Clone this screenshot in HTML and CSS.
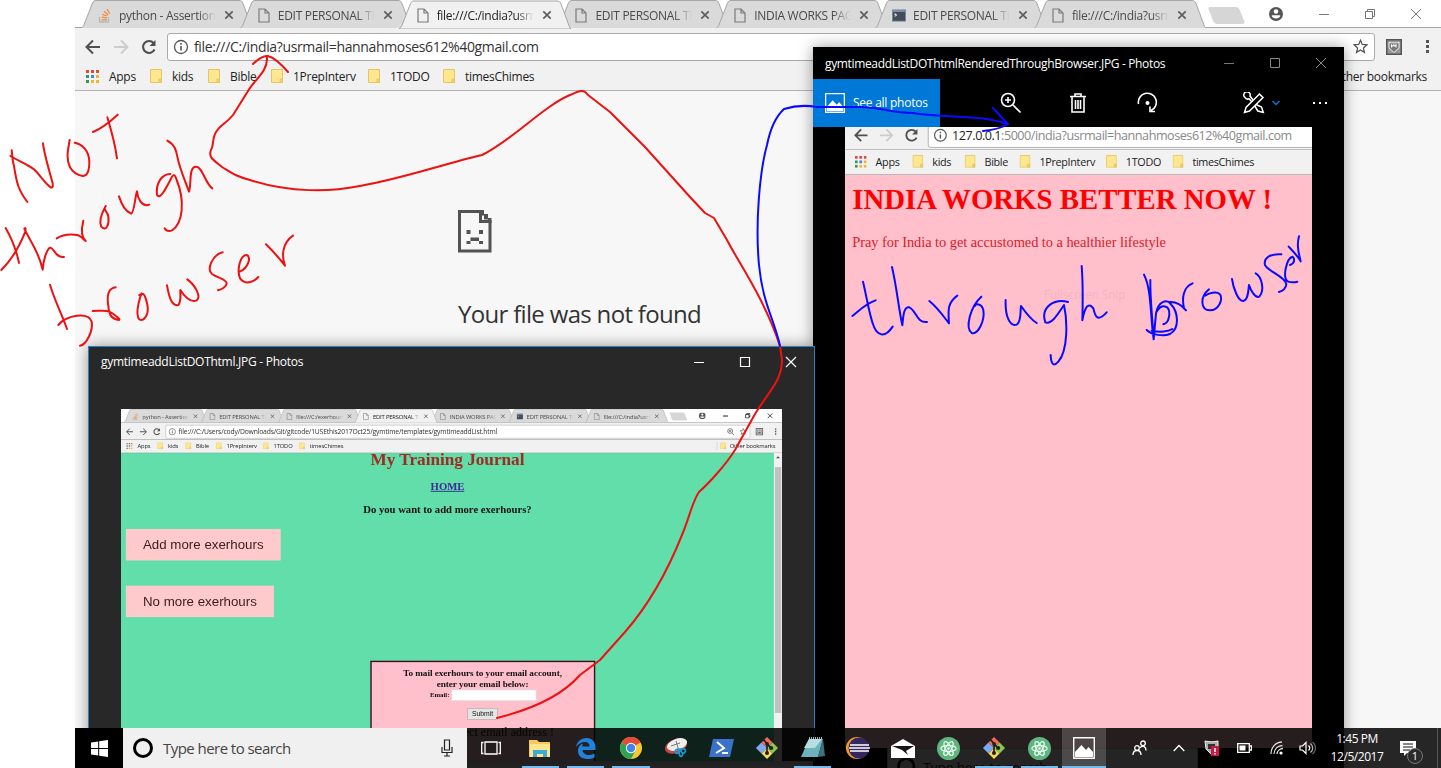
FILE: index.html
```
<!DOCTYPE html>
<html lang="en">
<head>
<meta charset="utf-8">
<title>Desktop</title>
<link rel="stylesheet" href="styles.css">
</head>
<body>
<svg class="defs" width="0" height="0">
  <symbol id="page" viewBox="0 0 12 15"><path d="M1 1h6l4 4v9H1zM7 1v4h4" fill="none" stroke="#7b7b7b" stroke-width="1.2"/></symbol>
  <symbol id="x" viewBox="0 0 10 10"><path d="M1.3 1.3l7.4 7.4M8.700 1.3L1.3 8.700" stroke="#5f5f5f" stroke-width="1.7"/></symbol>
  <symbol id="stack" viewBox="0 0 14 15"><path d="M1.500 9v5h9V9" fill="none" stroke="#b9b9b9" stroke-width="1.300"/><path d="M3.500 11.800h5.500M3.600 9.200l5.400.7M4.300 6.300l5.100 1.700M6 3.300l4.200 3.500M9 1l2.700 4.500" stroke="#f08a3c" stroke-width="1.300"/></symbol>
  <symbol id="term" viewBox="0 0 16 14"><path fill="#7c8ea5" d="M0 0h16v14H0z"/><path fill="#444c58" d="M1 3h14v10H1z"/><path d="M3 5l2 1.500L3 8" stroke="#fff" stroke-width="1.200" fill="none"/></symbol>
  <symbol id="tabshape" viewBox="0 0 172 28"><path d="M0 28.500L2.500 26 11.500 3C12.500 1 13.500 .5 15 .5h143c2 0 3 .7 4 3l8.500 23 1.500 2z" stroke="#a6a6a6"/></symbol>
  <symbol id="back" viewBox="0 0 16 16"><path d="M15 8H2M8 1.500L1.500 8 8 14.500" fill="none" stroke="currentColor" stroke-width="2"/></symbol>
  <symbol id="reload" viewBox="0 0 16 16"><path d="M13.500 10.500A6 6 0 1 1 12.600 4" fill="none" stroke="#505050" stroke-width="2.100"/><path d="M14.500 1v6h-6z" fill="#505050"/></symbol>
  <symbol id="info" viewBox="0 0 16 16"><circle cx="8" cy="8" r="6.500" fill="none" stroke="#555" stroke-width="1.300"/><path d="M8 7v4.500M8 4v1.700" stroke="#555" stroke-width="1.600"/></symbol>
  <symbol id="folder" viewBox="0 0 12 14"><path d="M.5 .5h11v13H.5z" fill="#ffe78f" stroke="#e6c662"/><path d="M9 13.500V10h2.500v3.500z" fill="#f3ce66" stroke="#e6c662"/></symbol>
  <symbol id="apps" viewBox="0 0 13 13"><path fill="#de4b3f" d="M0 0h3v3H0zM5 0h3v3H5zM10 0h3v3h-3z"/><path fill="#2c9a5b" d="M0 5h3v3H0z"/><path fill="#4387d6" d="M5 5h3v3H5z"/><path fill="#efb62b" d="M10 5h3v3h-3z"/><path fill="#2c9a5b" d="M0 10h3v3H0z"/><path fill="#efb62b" d="M5 10h3v3H5zM10 10h3v3h-3z"/></symbol>
  <symbol id="user" viewBox="0 0 14 14"><circle cx="7" cy="7" r="7" fill="#555"/><circle cx="7" cy="4.500" r="2.300" fill="#fff"/><path d="M2.800 8.300h8.400v1.200C9.500 12 4.500 12 2.800 9.500z" fill="#fff"/></symbol>
  <symbol id="star" viewBox="0 0 15 15"><path d="M7.500 1.300l1.800 4.200 4.500.4-3.400 3 1 4.400-3.900-2.300-3.900 2.300 1-4.400-3.400-3 4.500-.4z" fill="none" stroke="#555" stroke-width="1.300"/></symbol>
  <symbol id="badge" viewBox="0 0 16 16"><path fill="#555" d="M0 0h16v16H0z"/><path d="M1.500 1.500h13v13h-13z" fill="#999"/><path d="M3 3.500c3 .5 7 .5 10 0v5.300L8 13.500 3 8.800z" fill="#777" stroke="#eee"/><path d="M5.500 8.500v-3l1.300 2 1-2 1 2 1.300-2v3" stroke="#fff" fill="none"/></symbol>
  <symbol id="git" viewBox="0 0 26 26"><path d="M13 1l6 6-6 6-6-6z" fill="#f16a5d"/><path d="M7 7l6 6-6 6-6-6z" fill="#7ea9ee"/><path d="M19 7l6 6-6 6-6-6z" fill="#8cc552"/><path d="M13 13l6 6-6 6-6-6z" fill="#f8d85c"/><path d="M9 4l4 4v11M13 8l4 5" fill="none" stroke="#20201c" stroke-width="1.800"/><circle cx="13" cy="8.500" r="2" fill="#20201c"/><circle cx="17.500" cy="13" r="2.200" fill="#20201c"/><circle cx="13" cy="18.500" r="2.200" fill="#20201c"/></symbol>
  <symbol id="atom" viewBox="0 0 24 24"><circle cx="12" cy="12" r="12" fill="#5fb57d"/><g fill="none" stroke="#e8fff0" stroke-width="1.200"><ellipse cx="12" cy="12" rx="8" ry="3"/><ellipse cx="12" cy="12" rx="8" ry="3" transform="rotate(60 12 12)"/><ellipse cx="12" cy="12" rx="8" ry="3" transform="rotate(120 12 12)"/></g><circle cx="12" cy="12" r="1.300" fill="#fff"/></symbol>
  <symbol id="photo" viewBox="0 0 22 22"><path d="M.7 .7h20.600v20.600H.7z" fill="none" stroke="#fff" stroke-width="1.400"/><path d="M2 20v-5l6.500-7 4.500 5 2.500-3 4.500 5v5z" fill="#fff"/></symbol>
</svg>

<main class="desktop">
  <section class="browser main-browser">
    <div class="tabs">
      <div class="tab"><svg class="shape"><use href="#tabshape"/></svg><svg class="fav"><use href="#stack"/></svg><span>python - Assertion</span><svg class="close"><use href="#x"/></svg></div>
      <div class="tab"><svg class="shape"><use href="#tabshape"/></svg><svg class="fav"><use href="#page"/></svg><span>EDIT PERSONAL TR</span><svg class="close"><use href="#x"/></svg></div>
      <div class="tab active"><svg class="shape"><use href="#tabshape"/></svg><svg class="fav"><use href="#page"/></svg><span>file:///C:/india?usrm</span><svg class="close"><use href="#x"/></svg></div>
      <div class="tab"><svg class="shape"><use href="#tabshape"/></svg><svg class="fav"><use href="#page"/></svg><span>EDIT PERSONAL TR</span><svg class="close"><use href="#x"/></svg></div>
      <div class="tab"><svg class="shape"><use href="#tabshape"/></svg><svg class="fav"><use href="#page"/></svg><span>INDIA WORKS PAG</span><svg class="close"><use href="#x"/></svg></div>
      <div class="tab"><svg class="shape"><use href="#tabshape"/></svg><svg class="fav"><use href="#term"/></svg><span>EDIT PERSONAL TR</span><svg class="close"><use href="#x"/></svg></div>
      <div class="tab"><svg class="shape"><use href="#tabshape"/></svg><svg class="fav"><use href="#page"/></svg><span>file:///C:/india?usrm</span><svg class="close"><use href="#x"/></svg></div>
      <i class="newtab"></i>
      <div class="caption"><svg width="14" height="14"><use href="#user"/></svg><svg width="12" height="12"><path d="M1 6.500h10" stroke="#777"/></svg><svg width="12" height="12"><path d="M1.500 3.500h7v7h-7zM3.500 3.500v-2h7v7h-2" fill="none" stroke="#777"/></svg><svg width="12" height="12"><path d="M1 1l10 10M11 1L1 11" stroke="#777"/></svg></div>
    </div>
    <div class="toolbar">
      <svg class="nav"><use href="#back"/></svg><svg class="nav fwd off"><use href="#back"/></svg><svg class="nav"><use href="#reload"/></svg>
      <div class="omnibox"><svg width="16" height="16"><use href="#info"/></svg><span class="url">file:///C:/india?usrmail=hannahmoses612%40gmail.com</span><svg class="end" width="15" height="15"><use href="#star"/></svg></div>
      <svg width="16" height="16"><use href="#badge"/></svg><svg class="menu" width="4" height="14"><path d="M0 0h3v3H0zM0 5h3v3H0zM0 10h3v3H0z" fill="#555"/></svg>
    </div>
    <div class="bookmarks">
      <div class="bm a"><svg width="13" height="13"><use href="#apps"/></svg><span>Apps</span></div>
      <div class="bm b"><svg width="12" height="14"><use href="#folder"/></svg><span>kids</span></div>
      <div class="bm c"><svg width="12" height="14"><use href="#folder"/></svg><span>Bible</span></div>
      <div class="bm d"><svg width="12" height="14"><use href="#folder"/></svg><span>1PrepInterv</span></div>
      <div class="bm e"><svg width="12" height="14"><use href="#folder"/></svg><span>1TODO</span></div>
      <div class="bm f"><svg width="12" height="14"><use href="#folder"/></svg><span>timesChimes</span></div>
      <div class="bm other"><svg width="12" height="14"><use href="#folder"/></svg><span>Other bookmarks</span></div>
    </div>
    <div class="error-page">
      <svg width="34" height="43"><path d="M22 1.500H1.500v39.500H32V12" fill="none" stroke="#535353" stroke-width="3"/><path d="M22.500 0v11.500H33.500" fill="none" stroke="#535353" stroke-width="3"/><path d="M22 0h4v4h4v4h3.500v5H30V9.500h-4v-4h-4z" fill="#535353"/><path d="M8.500 20h4v4h-4zM21 20h4v4h-4zM8.500 34v-3h4v-3.500H21V31h4v3h-4v-3h-8.500v3z" fill="#535353"/></svg>
      <h2>Your file was not found</h2>
    </div>
  </section>

  <section class="photos right-win">
    <div class="titlebar"><span>gymtimeaddListDOThtmlRenderedThroughBrowser.JPG - Photos</span>
      <div class="ctl"><svg><path d="M1 6.500h10" stroke="#777"/></svg><svg><path d="M1.500 1.500h9v9h-9z" fill="none" stroke="#888"/></svg><svg><path d="M1 1l10 10M11 1L1 11" stroke="#888"/></svg></div></div>
    <div class="commands">
      <div class="seeall"><svg width="20" height="20"><use href="#photo"/></svg><span>See all photos</span></div>
      <svg class="c1" width="22" height="22"><g fill="none" stroke="#fff" stroke-width="1.600"><circle cx="8" cy="8" r="6.500"/><path d="M13 13l7.500 7.500M5 8h6M8 5v6"/></g></svg>
      <svg class="c2" width="18" height="22"><path d="M1 4.500h16M6 4V2h6v2M3 5v15h12V5M6.500 8v9M9 8v9M11.500 8v9" fill="none" stroke="#fff" stroke-width="1.600"/></svg>
      <svg class="c3" width="22" height="22"><path d="M1.500 12A9 9 0 1 1 14 18.500M13 14.500v5h5" fill="none" stroke="#fff" stroke-width="1.600"/><circle cx="10.500" cy="11" r="2" fill="#fff"/></svg>
      <svg class="c4" width="22" height="22"><g fill="none" stroke="#fff" stroke-width="1.500"><path d="M1.500 20.500l1.500-5L16.500 2 20 5.500 6.500 19z"/><path d="M2 5.500a3.200 3.200 0 1 1 5-1.500l3 4M2 5.500c1.200 1.500 3 1.800 4 1.200l3 3.300M13 12.500l5.500 2.500 1.800 5.500-5.500-1.500-3-5"/></g></svg>
      <svg class="c5" width="8" height="6"><path d="M.5 1l3.500 3.500L7.500 1" fill="none" stroke="#0078d7" stroke-width="1.500"/></svg>
      <svg class="c6" width="16" height="4"><path d="M1 1h2v2H1zM7 1h2v2H7zM13 1h2v2h-2z" fill="#fff"/></svg>
    </div>
    <div class="picture">
      <div class="browser shot">
        <div class="tabs"></div>
        <div class="toolbar">
          <svg class="nav"><use href="#back"/></svg><svg class="nav fwd off"><use href="#back"/></svg><svg class="nav"><use href="#reload"/></svg>
          <div class="omnibox"><svg width="16" height="16"><use href="#info"/></svg><span class="url local"><b>127.0.0.1</b>:5000/india?usrmail=hannahmoses612%40gmail.com</span></div>
        </div>
        <div class="bookmarks">
          <div class="bm a"><svg width="13" height="13"><use href="#apps"/></svg><span>Apps</span></div>
          <div class="bm b"><svg width="12" height="14"><use href="#folder"/></svg><span>kids</span></div>
          <div class="bm c"><svg width="12" height="14"><use href="#folder"/></svg><span>Bible</span></div>
          <div class="bm d"><svg width="12" height="14"><use href="#folder"/></svg><span>1PrepInterv</span></div>
          <div class="bm e"><svg width="12" height="14"><use href="#folder"/></svg><span>1TODO</span></div>
          <div class="bm f"><svg width="12" height="14"><use href="#folder"/></svg><span>timesChimes</span></div>
        </div>
        <div class="pink-page">
          <h1>INDIA WORKS BETTER NOW !</h1>
          <p>Pray for India to get accustomed to a healthier lifestyle</p>
          <p class="ghost">Fullscreen Snip</p>
        </div>
        <div class="inner-task"><div class="inner-search"><i></i>Type here to search</div></div>
      </div>
    </div>
  </section>

  <section class="photos left-win">
    <div class="titlebar"><span>gymtimeaddListDOThtml.JPG - Photos</span>
      <div class="ctl"><svg><path d="M1 6.500h10" stroke="#fff"/></svg><svg><path d="M1.500 1.500h9v9h-9z" fill="none" stroke="#fff" stroke-width="1.200"/></svg><svg><path d="M1 1l10 10M11 1L1 11" stroke="#fff" stroke-width="1.200"/></svg></div></div>
    <div class="picture">
      <div class="browser shot">
        <div class="tabs">
          <div class="tab"><svg class="shape"><use href="#tabshape"/></svg><svg class="fav"><use href="#stack"/></svg><span>python - Assertion</span><svg class="close"><use href="#x"/></svg></div>
          <div class="tab"><svg class="shape"><use href="#tabshape"/></svg><svg class="fav"><use href="#page"/></svg><span>EDIT PERSONAL TR</span><svg class="close"><use href="#x"/></svg></div>
          <div class="tab"><svg class="shape"><use href="#tabshape"/></svg><svg class="fav"><use href="#page"/></svg><span>file:///C:/exerhours</span><svg class="close"><use href="#x"/></svg></div>
          <div class="tab active"><svg class="shape"><use href="#tabshape"/></svg><svg class="fav"><use href="#page"/></svg><span>EDIT PERSONAL TR</span><svg class="close"><use href="#x"/></svg></div>
          <div class="tab"><svg class="shape"><use href="#tabshape"/></svg><svg class="fav"><use href="#page"/></svg><span>INDIA WORKS PAG</span><svg class="close"><use href="#x"/></svg></div>
          <div class="tab"><svg class="shape"><use href="#tabshape"/></svg><svg class="fav"><use href="#term"/></svg><span>EDIT PERSONAL TR</span><svg class="close"><use href="#x"/></svg></div>
          <div class="tab"><svg class="shape"><use href="#tabshape"/></svg><svg class="fav"><use href="#page"/></svg><span>file:///C:/india?usrm</span><svg class="close"><use href="#x"/></svg></div>
          <i class="newtab"></i>
          <div class="caption dark"><svg width="14" height="14"><use href="#user"/></svg><svg width="12" height="12"><path d="M1 6.500h10" stroke="#111" stroke-width="2"/></svg><svg width="12" height="12"><path d="M1.500 3.500h7v7h-7zM3.500 3.500v-2h7v7h-2" fill="none" stroke="#111" stroke-width="1.500"/></svg><svg width="12" height="12"><path d="M1 1l10 10M11 1L1 11" stroke="#111" stroke-width="1.500"/></svg></div>
        </div>
        <div class="toolbar">
          <svg class="nav"><use href="#back"/></svg><svg class="nav fwd"><use href="#back"/></svg><svg class="nav"><use href="#reload"/></svg>
          <div class="omnibox"><svg width="16" height="16"><use href="#info"/></svg><span class="url long">file:///C:/Users/cody/Downloads/Git/gitcode/1USEthis2017Oct25/gymtime/templates/gymtimeaddList.html</span><svg class="end" width="16" height="16"><path d="M10 10l5 5M4 6.500h5M6.500 4v5" stroke="#555" stroke-width="1.500"/><circle cx="6.500" cy="6.500" r="5" fill="none" stroke="#555" stroke-width="1.500"/></svg><svg class="after" width="15" height="15"><use href="#star"/></svg></div>
          <svg width="16" height="16"><use href="#badge"/></svg><svg class="menu" width="4" height="14"><path d="M0 0h3v3H0zM0 5h3v3H0zM0 10h3v3H0z" fill="#555"/></svg>
        </div>
        <div class="bookmarks">
          <div class="bm a"><svg width="13" height="13"><use href="#apps"/></svg><span>Apps</span></div>
          <div class="bm b"><svg width="12" height="14"><use href="#folder"/></svg><span>kids</span></div>
          <div class="bm c"><svg width="12" height="14"><use href="#folder"/></svg><span>Bible</span></div>
          <div class="bm d"><svg width="12" height="14"><use href="#folder"/></svg><span>1PrepInterv</span></div>
          <div class="bm e"><svg width="12" height="14"><use href="#folder"/></svg><span>1TODO</span></div>
          <div class="bm f"><svg width="12" height="14"><use href="#folder"/></svg><span>timesChimes</span></div>
          <div class="bm other"><svg width="12" height="14"><use href="#folder"/></svg><span>Other bookmarks</span></div>
        </div>
        <div class="journal">
          <div class="content">
            <h1>My Training Journal</h1>
            <a>HOME</a>
            <h3>Do you want to add more exerhours?</h3>
            <div class="big add">Add more exerhours</div>
            <div class="big no">No more exerhours</div>
            <div class="mailbox">
              <h4>To mail exerhours to your email account,<br>enter your email below:</h4>
              <div class="field"><b>Email:</b><i></i></div>
              <div class="submit">Submit</div>
              <div class="warn">Enter correct email address !</div>
            </div>
          </div>
          <div class="scroll"><svg width="17" height="17"><path d="M4.500 10.500l4-4 4 4z" fill="#444"/></svg><i></i></div>
        </div>
      </div>
    </div>
  </section>

  <footer class="taskbar">
    <div class="start"><svg width="17" height="17"><path d="M0 2.500l7.200-1V8H0zM8.200 1.300L17 0v8H8.200zM0 9h7.200v6.500L0 14.500zM8.200 9H17v8l-8.800-1.300z" fill="#fff"/></svg></div>
    <div class="search"><i></i><span>Type here to search</span><svg width="12" height="18"><path d="M3.500 1h5v10h-5zM1 8v5.500h10V8M6 13.500V17M3 17h6" fill="none" stroke="#222" stroke-width="1.200"/></svg></div>
    <div class="apps">
      <div class="view"><svg width="20" height="16"><path d="M4 2h12v12H4zM2.500 2.500H.7v11h1.800M17.500 2.500h1.800v11h-1.800" fill="none" stroke="#fff" stroke-width="1.300"/></svg></div>
      <div class="run"><svg width="22" height="19"><path d="M0 1h8l2 2h11v15H0z" fill="#f5c95a"/><path d="M1 5h20v13H1z" fill="#fde58d"/><path d="M4 18v-7h14v7h-4v-3H8v3z" fill="#3cabd6"/></svg></div>
      <div class="run"><svg width="21" height="21"><path d="M1 9C2 3 7 0 11.500 0 17 0 20.500 4 20.500 9v3H7.500c.3 3.500 3 5 6.500 5 2 0 4-.6 5.500-1.500v4C17.500 20.700 15 21 12.500 21 6 21 2.500 17 3 12c.3-3 2-5.500 5-6.500C7.500 6.500 7.300 7.500 7.300 8.500H14.500C14.500 5.500 13 4 10 4 6 4 3 6 1 9z" fill="#1d83dc"/></svg></div>
      <div class="run"><svg width="22" height="22"><circle cx="11" cy="11" r="11" fill="#f6c933"/><path d="M11 11L1.500 5.500A11 11 0 0 1 20.500 5.500z" fill="#e24a3b"/><path d="M1.500 5.500A11 11 0 0 0 11 22l4.500-8.500L11 11z" fill="#2fa352"/><circle cx="11" cy="11" r="5.200" fill="#fff"/><circle cx="11" cy="11" r="4.200" fill="#4285e8"/></svg></div>
      <div><svg width="25" height="22"><ellipse cx="12" cy="9" rx="11.500" ry="7" transform="rotate(-20 12 9)" fill="#c84642"/><ellipse cx="13" cy="7.500" rx="10.500" ry="5.700" transform="rotate(-20 13 7.500)" fill="#eee"/><path d="M7 9l9-3M12 4l3 10" stroke="#777"/><path d="M15 12c-6 0-4 6-1 4zM16 12c1 3 3 6 5 3s-2-4-5-3zM16 13c-2 3 0 8 2 6s0-4-2-6z" fill="none" stroke="#2596cf" stroke-width="1.700"/></svg></div>
      <div><svg width="25" height="20"><path d="M4 1h21l-4 18H0z" fill="#3b72c9"/><path d="M8 4l7 6-8 5M13 15h6" stroke="#fff" stroke-width="2" fill="none"/></svg></div>
      <div><svg width="24" height="24"><use href="#git"/></svg></div>
      <div class="run"><svg width="24" height="22"><path d="M8 2h14l-5 18H0z" fill="#6fb1bd"/><path d="M8 2h13l-7 9H3z" fill="#b7dee2"/><path d="M8 1h14" stroke="#eee" stroke-width="1.500" stroke-dasharray="1 1"/><path d="M17 20l5-18 2 17z" fill="#3c737c"/></svg></div>
      <div><svg width="24" height="22"><circle cx="11" cy="11" r="11" fill="#f79a2c"/><circle cx="13" cy="11" r="10.500" fill="#34265f"/><path d="M4 8h19M3 11h21M4 14h19" stroke="#fff" stroke-width="1.700"/></svg></div>
      <div><svg width="24" height="19"><path d="M0 7l12-7 12 7v12H0z" fill="#fff"/><path d="M1 7h22l-8 5 2 4-6-5z" fill="#171416"/></svg></div>
      <div><svg width="23" height="23"><use href="#atom"/></svg></div>
      <div class="run"><svg width="24" height="24"><use href="#git"/></svg></div>
      <div class="run"><svg width="23" height="23"><use href="#atom"/></svg></div>
      <div class="run current"><svg width="22" height="22"><use href="#photo"/></svg></div>
    </div>
    <div class="tray">
      <svg class="people" width="15" height="16"><g fill="none" stroke="#fff" stroke-width="1.300"><circle cx="5" cy="8" r="2.300"/><path d="M1 15c0-6 8-6 8 0"/><circle cx="11" cy="3.300" r="2.300"/><path d="M8 8c2-3 6-2 6 2.500"/></g></svg>
      <svg class="up" width="12" height="8"><path d="M.7 7L6 1.500 11.300 7" fill="none" stroke="#fff" stroke-width="1.300"/></svg>
      <svg class="shield" width="15" height="16"><path d="M1 1c4 1 9 1 13 0v8l-7 5-5-5z" fill="#aaa" stroke="#eee"/><path d="M4 4h7v5H4z" fill="#333"/><path d="M7 6h8v10H7z" fill="#cb1745"/><path d="M11 8v4M11 13v1.500" stroke="#fff" stroke-width="1.500"/></svg>
      <svg class="battery" width="15" height="10"><path d="M.7 .7h11.600v8.600H.7zM13 3h1.500v4H13" fill="none" stroke="#fff" stroke-width="1.300"/><path d="M2.500 2.500h6v5h-6z" fill="#fff"/></svg>
      <svg class="wifi" width="14" height="14"><g fill="none" stroke="#ddd" stroke-width="1.300"><path d="M1 13C1 6 6 1 12 1M4 13c0-5 4-8.500 8.500-8.500M7 13c0-3 3-5.500 6-5.500"/></g><circle cx="11" cy="12" r="1.600" fill="#fff"/></svg>
      <svg class="sound" width="17" height="14"><g fill="none" stroke="#fff" stroke-width="1.200"><path d="M1 5h2.500L7 1.500v11L3.500 9H1z"/><path d="M9.500 4.500c1.500 1.500 1.500 3.500 0 5"/><path d="M11.500 2.500c3 2.500 3 6.500 0 9" stroke="#bbb"/><path d="M13.500 1c4 3.500 4 8.500 0 12" stroke="#666"/></g></svg>
    </div>
    <div class="clock">1:45 PM<br>12/5/2017</div>
    <div class="action"><svg width="24" height="24"><path d="M0 1h16v12h-9l-3 3v-3H0z" fill="#fff"/><path d="M3 4h10M3 7h10M3 10h7" stroke="#111"/><circle cx="15" cy="16" r="7.500" fill="#2b2b2b" stroke="#777"/></svg><span>1</span></div>
  </footer>

  <svg class="ink" viewBox="0 0 1441 768" width="1441" height="768">
    <g class="red">
      <path d="M253 64Q262 55 268 56Q276 58 288 72M267 57C268 72 254 80 248 91L233 115C226 124 219 125 215 134C212 140 214 145 211 150C208 158 214 160 222 167C232 173 235 176 250 180C290 193 330 192 360 186C405 178 440 165 482 155C510 142 545 105 570 95C578 92 583 88 588 95L610 112L645 147L690 197L705 213L714 218L727 240C740 265 765 300 780 346L782 360C782 380 770 390 755 414L735 450C725 466 708 484 699 492C692 502 690 516 682 535C670 565 653 600 625 632L600 660L580 675C560 698 525 711 497 718"/>
      <g transform="translate(0 80) scale(.33333)">
        <path d="M35 211C38 230 36 240 42 258C50 310 55 330 82 366M31 228C60 245 80 252 102 268C120 285 135 310 152 322Q160 326 158 310C150 280 132 220 129 190"/>
        <path d="M209 180C203 215 198 235 210 262C220 280 235 286 248 288C262 288 268 270 268 245C267 210 245 192 224 188M279 156C305 145 325 130 353 104M322 112C335 155 345 190 351 235"/>
        <path d="M17 444C32 470 48 505 57 549M4 570C40 535 60 495 76 455Q78 440 73 446C88 480 115 510 128 569C130 540 140 510 149 503C162 500 165 535 192 531"/>
        <path d="M170 475C190 463 215 462 235 466C248 472 252 480 257 483C245 472 243 450 250 422M317 378C305 400 296 425 304 440C320 458 328 430 325 410C323 395 315 395 315 388M357 349C365 375 380 395 393 401C403 400 405 350 411 334C413 355 425 382 448 374"/>
        <path d="M511 282C485 282 467 310 471 345C480 360 495 330 512 298C520 280 525 283 530 300C555 360 550 430 515 452C505 455 498 452 494 445M502 182C525 195 528 210 532 230C540 270 555 300 567 335C575 315 565 260 588 260C608 260 615 310 637 325"/>
        <path d="M150 614C165 665 185 700 201 747M175 735C200 705 265 695 275 725C280 750 260 795 240 797M278 693C305 693 325 688 340 702Q365 720 356 720C330 715 327 700 325 678C320 645 325 625 347 622M418 645C430 640 432 640 437 655C442 670 448 690 440 705C430 725 415 725 413 705C410 690 418 655 425 640"/>
        <path d="M501 616C507 650 515 680 535 675C545 665 540 640 541 630C550 645 572 670 590 661C605 650 585 615 562 598M668 517C635 525 620 570 636 582C655 595 680 598 680 610C680 620 665 628 654 631M719 575C745 565 755 530 740 525C720 525 710 570 720 595C735 615 760 608 775 591M798 493C820 515 835 530 855 557C845 530 845 490 879 467"/>
      </g>
    </g>
    <g class="blue">
      <path d="M780 346C774 318 763 305 759 265C755 222 760 170 767 145Q772 120 784 109Q800 104 817 107L862 107C885 108 892 113 913 113C940 118 980 114 1008 124M993 108Q1001 117 1008 124Q1001 129 983 131"/>
      <g transform="translate(830 230) scale(.33333)">
        <path d="M99 155C110 200 115 240 128 280C140 320 165 325 188 290M67 258C90 240 105 222 137 211M186 111C200 170 205 230 217 286C220 260 220 230 238 232C258 240 260 280 291 276M298 213C325 235 345 265 357 280C355 245 350 220 382 197M454 200C420 230 405 295 425 309C445 315 465 270 460 240C455 220 435 220 435 228"/>
        <path d="M527 210C525 260 540 290 560 284C575 275 570 245 573 228C585 245 605 270 620 279M714 216C675 205 630 230 646 277C665 285 685 250 702 225C712 270 715 360 685 395C672 410 663 405 662 375M755 108C760 170 758 230 757 271C765 230 775 215 790 235C795 255 800 280 830 247"/>
        <path d="M942 134C965 180 960 250 971 328M961 150C960 210 968 270 971 328L978 250C985 215 1010 205 1022 222C1045 245 1050 295 1020 312C1000 320 965 315 950 300M965 302C990 308 1015 305 1027 297M980 245C995 220 1020 225 1018 255C1015 275 1010 280 1000 283M1068 241C1055 225 1040 215 1020 216M1062 235C1055 205 1060 170 1088 160M1137 178C1110 200 1110 240 1140 241C1165 241 1180 210 1170 193C1160 182 1135 190 1125 197M1206 147C1210 175 1225 215 1240 213C1255 210 1255 180 1257 165C1262 180 1275 205 1288 200C1305 180 1295 140 1277 130"/>
        <path d="M1354 73C1320 70 1300 85 1305 105C1315 125 1365 140 1369 162C1368 175 1360 182 1347 186M1380 105C1395 100 1395 85 1387 80C1370 85 1355 145 1375 155C1385 158 1395 157 1402 155M1376 50C1390 65 1405 80 1412 94C1405 65 1400 45 1407 19"/>
      </g>
    </g>
  </svg>
</main>
</body>
</html>
```
FILE: styles.css
```
* { box-sizing: border-box; }
body { margin: 0; background: #fff; font-family: "Open Sans", "Noto Sans", sans-serif; overflow: hidden; }
h1, h2, h3, h4, p { margin: 0; }
svg { flex: none; display: block; }
.defs { position: absolute; }
.desktop { position: relative; width: 1441px; height: 768px; overflow: hidden; background: #fff; }

/* browser chrome */
.browser { width: 1366px; display: flex; flex-direction: column; color: #222; }
.main-browser { position: absolute; left: 75px; top: 0; height: 728px; background: #f7f7f7; }
.tabs { height: 28px; flex: none; display: flex; background: #fff; padding-left: 6px; border-bottom: 1px solid #a6a6a6; }
.tab { position: relative; flex: none; width: 172px; height: 28px; margin-right: -13.200px; padding-left: 17px; display: flex; align-items: center; font-size: 12px; color: #4a4a4a; }
.tab .shape { position: absolute; left: 0; top: 0; width: 172px; height: 28px; fill: #dadada; }
.tab.active { z-index: 2; color: #222; }
.tab.active .shape { fill: #f1f1f1; height: 29px; }
.tab .fav { position: relative; width: 14px; height: 15px; margin-top: 2px; }
.tab span { position: relative; width: 104px; margin: 2px 0 0 7px; letter-spacing: -.3px; white-space: nowrap; -webkit-mask-image: linear-gradient(90deg, #000 76%, transparent 93%); mask-image: linear-gradient(90deg, #000 76%, transparent 93%); }
.tab .close { position: relative; width: 10px; height: 10px; margin: 2px 0 0 1px; }
.newtab { width: 31px; height: 17px; margin: 7px 0 0 18px; background: #d6d6d6; border-radius: 3px; transform: skewX(22deg); flex: none; }
.caption { margin-left: auto; display: flex; align-items: center; gap: 34px; padding-right: 19px; }
.caption svg:first-child { margin-right: 1px; }
.toolbar { height: 35px; flex: none; display: flex; align-items: center; background: #f1f1f1; padding: 2px 12px 0 10px; }
.nav { width: 16px; height: 16px; margin-right: 12px; color: #505050; }
.nav.fwd { transform: scaleX(-1); }
.nav.off { color: #ccc; }
.omnibox { flex: 1; height: 28px; margin: 0 11px 0 -2px; background: #fff; border: 1px solid #aaa; border-radius: 3px; display: flex; align-items: center; padding: 0 6px 0 5px; overflow: hidden; }
.main-browser .omnibox { margin-right: 11px; }
.main-browser .toolbar, .left-win .toolbar { padding-right: 11px; }
.main-browser .menu, .left-win .menu { margin-left: 24px; }
.url { margin-left: 5px; font-size: 14px; letter-spacing: -.35px; color: #333; white-space: nowrap; }
.url.local { color: #888; letter-spacing: -.52px; }
.url.local b { font-weight: 400; color: #222; }
.end { margin-left: auto; }
.after { margin-left: 10px; }
.menu { margin-left: 17px; }
.bookmarks { height: 28px; flex: none; display: flex; align-items: center; background: #f1f1f1; border-bottom: 1px solid #b3b3b3; padding: 0 14px 1px 11px; font-size: 12px; letter-spacing: -.28px; }
.bm { display: flex; align-items: center; gap: 10px; white-space: nowrap; }
.bm.a { width: 64px; } .bm.b { width: 58px; } .bm.c { width: 63px; } .bm.d { width: 97px; } .bm.e { width: 75px; }
.right-win .bm.c { width: 61px; } .right-win .bm.d { width: 96px; } .right-win .bm.e { width: 74px; }
.right-win .bookmarks { letter-spacing: -.35px; }
.bm.other { margin-left: auto; border-left: 1px solid #bbb; padding-left: 6px; gap: 8px; }
.error-page { padding: 119px 0 0 383px; }
.error-page h2 { margin-top: 44px; font-size: 24px; line-height: 34px; font-weight: 400; color: #333; letter-spacing: -.68px; }

/* photo viewer windows */
.photos { position: absolute; display: flex; flex-direction: column; color: #fff; }
.right-win { left: 813px; top: 47px; width: 531px; height: 721px; background: #000; box-shadow: 0 0 14px rgba(0,0,0,.4); }
.left-win { left: 88px; top: 346px; width: 727px; height: 415px; background: #282828; border: 1px solid #2c7fc2; border-bottom: 0; box-shadow: 0 0 14px rgba(0,0,0,.4); }
.titlebar { height: 32px; flex: none; display: flex; align-items: center; justify-content: space-between; padding: 0 17px 0 12px; font-size: 12px; letter-spacing: -.35px; }
.left-win .titlebar { height: 29px; letter-spacing: -.27px; }
.ctl { display: flex; gap: 34px; }
.ctl svg { width: 12px; height: 12px; }
.commands { height: 48px; flex: none; display: flex; align-items: center; }
.seeall { width: 127px; height: 48px; display: flex; align-items: center; gap: 8px; padding: 0 0 1px 12px; background: #0078d7; font-size: 12px; letter-spacing: -.25px; }
.c1 { margin-left: 60px; } .c2 { margin-left: 47px; } .c3 { margin-left: 50px; } .c4 { margin-left: 84px; } .c5 { margin-left: 7px; } .c6 { margin-left: 32px; }
.picture { overflow: hidden; flex: 1; }
.right-win .picture { width: 467px; margin-left: 32px; }
.left-win .picture { width: 661px; margin: 33px 0 0 32px; }
.shot { transform-origin: 0 0; }
.right-win .shot { transform: translateY(-34px) scale(.9); height: 768px; }
.left-win .shot { transform: scale(.484); height: 728px; }
.pink-page { height: 637px; flex: none; background: #ffc0cb; padding: 9px 8px; color: #f00; font-family: "Liberation Serif", serif; }
.pink-page h1 { font-size: 32px; line-height: 37px; }
.pink-page p { margin-top: 20px; font-size: 16px; line-height: 18px; color: #d8202c; letter-spacing: -.05px; }
.pink-page p.ghost { margin: 40px 0 0 213px; font-family: "Open Sans", sans-serif; font-size: 13px; color: #f4b5c2; }
.inner-task { height: 40px; background: #000; padding-left: 47px; flex: none; }
.inner-search { width: 345px; height: 40px; background: #f0f0f0; color: #222; display: flex; align-items: center; font-size: 15px; gap: 9px; padding-left: 11px; }
.inner-search i { width: 20px; height: 20px; border: 3px solid #000; border-radius: 50%; }

/* journal page */
.journal { display: flex; flex: 1; background: #62deab; font-family: "Liberation Serif", serif; }
.content { flex: 1; display: flex; flex-direction: column; align-items: center; color: #111; }
.content h1 { margin-top: -7px; font-size: 35.500px; line-height: 40px; color: #a12a22; }
.content a { margin-top: 23px; font-size: 22px; line-height: 26px; font-weight: 700; text-decoration: underline; color: #3b2a9a; }
.content h3 { margin-top: 23px; font-size: 22px; line-height: 24px; }
.big { align-self: flex-start; height: 65px; margin-left: 10px; background: #ffcacb; color: #3a1d1e; font: 27.500px/65px "Liberation Sans", sans-serif; text-align: center; }
.add { width: 320px; margin-top: 28px; }
.no { width: 306px; margin-top: 52px; }
.mailbox { width: 465px; height: 240px; margin: 90px 0 0 145px; border: 3px solid #26191b; background: #ffc0cb; display: flex; flex-direction: column; align-items: center; flex: none; }
.mailbox h4 { margin-top: 12px; font-size: 19px; line-height: 22px; text-align: center; white-space: nowrap; letter-spacing: -.1px; }
.field { display: flex; align-items: center; gap: 4px; font-size: 14px; margin-top: 1px; margin-right: -2px; }
.field i { width: 175px; height: 23px; background: #fff; border: 1px solid #ccc; }
.submit { width: 62px; height: 24px; margin-top: 15px; background: #e5e5e5; border: 1px solid #999; font: 14px/22px "Liberation Sans", sans-serif; text-align: center; }
.warn { margin: 10px 0 0 8px; font-size: 25px; line-height: 30px; }
.scroll { width: 17px; background: #f1f1f1; }
.scroll i { display: block; margin: 12px 2px; height: 508px; background: #c1c1c1; }

/* taskbar */
.taskbar { position: absolute; left: 75px; top: 728px; width: 1366px; height: 40px; display: flex; background: rgba(0,0,0,.85); color: #fff; }
.start { width: 48px; background: #000; display: flex; align-items: center; justify-content: center; }
.search { width: 344px; background: #f0f0f0; color: #444; display: flex; align-items: center; padding: 0 14px 0 10px; font-size: 15px; letter-spacing: -.55px; }
.search i { width: 20px; height: 20px; border: 3px solid #000; border-radius: 50%; margin-right: 10px; }
.search svg { margin-left: auto; }
.apps { display: flex; width: 641px; padding-left: 1px; }
.apps div { width: 45.400px; height: 40px; flex: none; display: flex; align-items: center; justify-content: center; position: relative; }
.apps .view { width: 46px; margin-right: 3.500px; }
.apps .run::after { content: ""; position: absolute; left: 4px; right: 4px; bottom: 0; height: 2px; background: #76b9ed; }
.apps .current { width: 44px; background: rgba(255,255,255,.18); }
.apps .current::after { left: 0; right: 0; }
.tray { width: 206px; display: flex; align-items: center; }
.people { margin-left: 24px; } .up { margin-left: 26px; } .shield { margin-left: 19px; } .battery { margin-left: 18px; } .wifi { margin-left: 18px; } .sound { margin-left: 15px; }
.clock { width: 86px; font-size: 12px; line-height: 18px; padding-top: 2px; text-align: center; letter-spacing: -.45px; }
.action { position: relative; width: 38px; border-right: 1px solid #555; display: flex; align-items: center; }
.action svg { margin-top: 7px; }
.action span { position: absolute; left: 11px; top: 20px; width: 8px; text-align: center; font-size: 11px; line-height: 15px; }

/* pen annotations */
.ink { position: absolute; left: 0; top: 0; fill: none; stroke-linecap: round; stroke-linejoin: round; pointer-events: none; }
.ink path { stroke-width: 2; vector-effect: non-scaling-stroke; }
.red { stroke: #ed1111; }
.blue { stroke: #0a0aff; }
```
